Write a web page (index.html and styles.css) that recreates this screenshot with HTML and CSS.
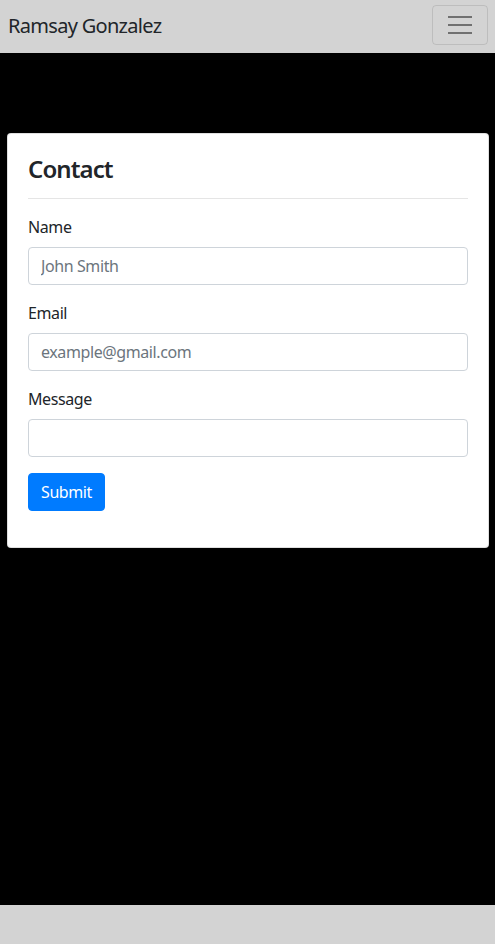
FILE: index.html
```html
<!DOCTYPE html>
<html lang="en">
<head>
<meta charset="utf-8">
<title>Contact</title>
<link rel="stylesheet" href="styles.css">
</head>
<body>
<div class="page">
  <nav class="navbar">
    <span class="brand">Ramsay Gonzalez</span>
    <button class="toggler" type="button" aria-label="Toggle navigation">
      <svg width="24" height="18" viewBox="0 0 24 18">
        <rect x="0" y="0" width="24" height="2" fill="#707070"/>
        <rect x="0" y="8" width="24" height="2" fill="#707070"/>
        <rect x="0" y="16" width="24" height="2" fill="#707070"/>
      </svg>
    </button>
  </nav>
  <main class="main">
    <div class="card">
      <h3 class="title">Contact</h3>
      <hr class="divider">
      <form class="form">
        <div class="group">
          <label class="label">Name</label>
          <input class="control" type="text" placeholder="John Smith">
        </div>
        <div class="group">
          <label class="label">Email</label>
          <input class="control" type="email" placeholder="example@gmail.com">
        </div>
        <div class="group">
          <label class="label">Message</label>
          <textarea class="control area" rows="1"></textarea>
        </div>
        <button class="submit" type="button">Submit</button>
      </form>
    </div>
  </main>
  <footer class="footer"></footer>
</div>
</body>
</html>
```
FILE: styles.css
```css
* { box-sizing: border-box; }
html, body { margin: 0; padding: 0; }
body {
  font-family: "Noto Sans", "Open Sans", sans-serif;
  font-size: 16px;
  line-height: 1.5;
  color: #212529;
  background: #000;
  letter-spacing: -0.4px;
}
.page {
  display: flex;
  flex-direction: column;
  min-height: 944px;
}
.navbar {
  height: 53px;
  background: #d3d3d3;
  display: flex;
  align-items: flex-start;
  justify-content: space-between;
  padding: 5px 7px 0 8px;
}
.brand {
  font-size: 20px;
  line-height: 30px;
  margin-top: 6px;
  color: #212529;
  letter-spacing: -0.7px;
}
.toggler {
  width: 56px;
  height: 40px;
  background: transparent;
  border: 1px solid rgba(0,0,0,0.1);
  border-radius: 4px;
  display: flex;
  align-items: center;
  justify-content: center;
  padding: 0;
}
.main {
  flex: 1;
  background: #000;
  padding: 80px 6px 0 7px;
}
.card {
  background: #fff;
  border: 1px solid rgba(0,0,0,0.125);
  border-radius: 4px;
  padding: 20px 20px 20px 20px;
}
.title {
  margin: 0 0 16px;
  font-size: 24px;
  line-height: 28px;
  font-weight: 600;
  letter-spacing: -0.9px;
  padding-top: 1px;
}
.divider {
  margin: -1px 0 16px;
  border: 0;
  border-top: 1px solid rgba(0,0,0,0.1);
}
.form { margin: 0 0 16px; }
.group { margin-bottom: 16px; }
.label {
  display: block;
  margin-bottom: 8px;
  line-height: 24px;
}
.control {
  display: block;
  width: 100%;
  height: 38px;
  padding: 6px 12px;
  font-family: inherit;
  font-size: 16px;
  line-height: 24px;
  letter-spacing: -0.4px;
  color: #495057;
  background: #fff;
  border: 1px solid #ced4da;
  border-radius: 4px;
  margin: 0;
}
.control::placeholder { color: #6c757d; }
.area { resize: none; overflow: hidden; }
.submit {
  display: block;
  height: 38px;
  padding: 6px 12px;
  font-family: inherit;
  font-size: 16px;
  line-height: 24px;
  letter-spacing: -0.4px;
  color: #fff;
  background: #007bff;
  border: 1px solid #007bff;
  border-radius: 4px;
}
.footer {
  height: 39px;
  background: #d3d3d3;
}
```
